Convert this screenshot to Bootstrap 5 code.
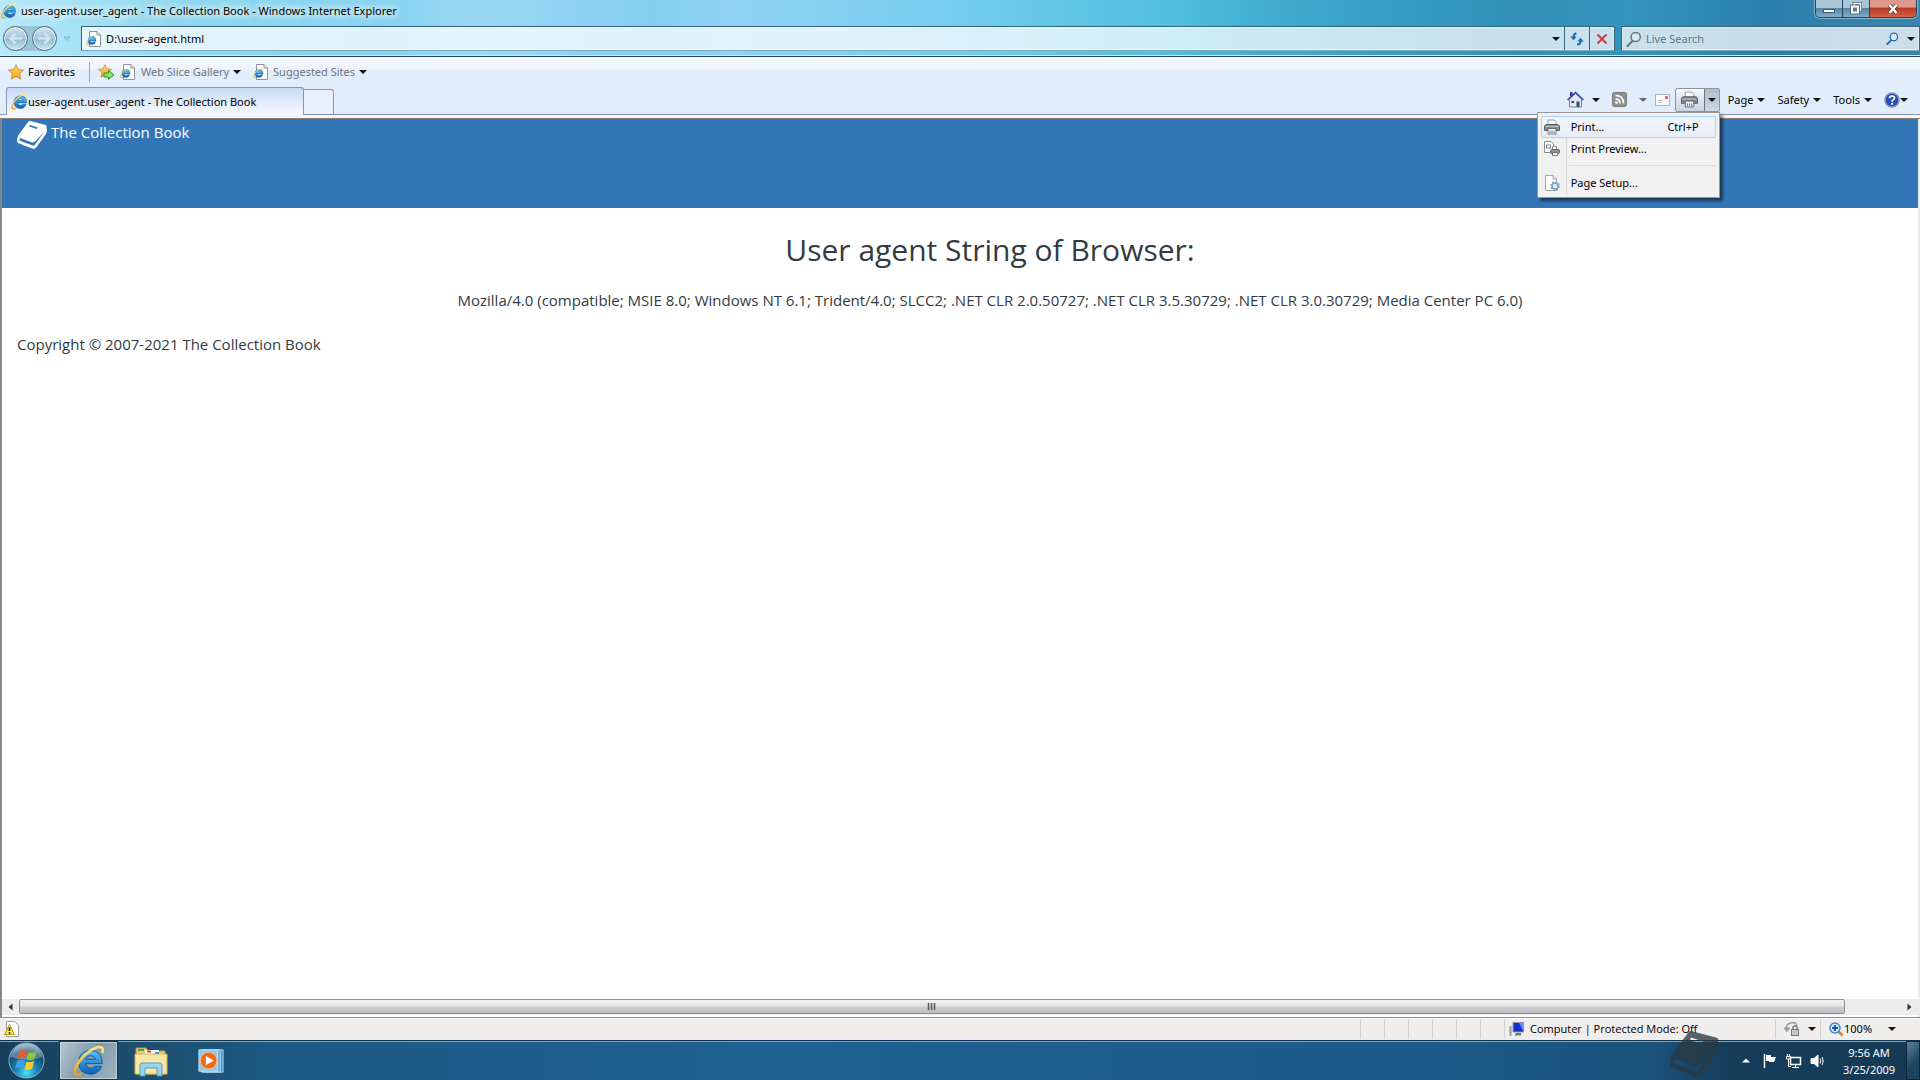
<!DOCTYPE html>
<html lang="en">
<head>
<meta charset="utf-8">
<meta name="viewport" content="width=device-width, initial-scale=1">
<title>user-agent.user_agent - The Collection Book</title>
<link href="https://cdn.jsdelivr.net/npm/bootstrap@5.3.0/dist/css/bootstrap.min.css" rel="stylesheet">
<style>
body{font-family:"Noto Sans","Open Sans",sans-serif;font-size:11px;line-height:16px;color:#000;background:#fff;overflow:hidden}
button{font:inherit;color:inherit;border:0;background:none;padding:0}
svg{flex:none;display:block}
.caret{flex:none;width:0;height:0;border:4px solid transparent;border-top-color:#111;border-bottom:0}
.caret.dim{border-top-color:#667}
.glass{background:linear-gradient(90deg,#b9e9fa 0,#8ed8ee 9%,#85d3f1 20%,#9bd7f7 25%,#84cef0 34%,#90d3f4 38%,#75cdee 50%,#62c6e4 55%,#4fbfdd 61%,#40add0 66%,#359fc6 72%,#3190b8 79%,#3394bd 85%,#2b7fae 92%,#3b84ab 100%);border-bottom:1px solid #28476a;box-shadow:inset 0 -1px #c9ecf8}
.title-row{height:26px;padding:0 3px 0 1px}
.title-text{height:22px}
.title-text span{text-shadow:0 0 8px #fff,0 0 8px #fff,0 0 10px #fff}
.win-btns{height:18px;border:1px solid #23425c;border-top:0;border-radius:0 0 5px 5px;overflow:hidden;box-shadow:0 0 0 1px #ffffff66}
.win-btns button{width:27px;height:17px;background:linear-gradient(#a9c6d8 45%,#5685a5 50%,#7fb0c9);border-right:1px solid #23425c;display:flex;align-items:center;justify-content:center}
.win-btns .close-btn{width:46px;border:0;background:linear-gradient(#dc9a8a 40%,#b93a20 50%,#d26444)}
.addr-row{height:30px;padding:0 0 5px 3px}
.orb{width:25px;height:25px;border-radius:50%;border:1px solid #4c6c82;background:linear-gradient(#d3e5ee,#a5c5d6 50%,#94bace 52%,#c6e4ee);box-shadow:inset 0 0 0 1px #e6f5fa;display:flex;align-items:center;justify-content:center}
.orb-pair{gap:4px;background:#7fa6bd88;border-radius:12px}
.recent{width:24px;padding-left:6px}
.field{height:25px;border:1px solid #36607e;border-bottom-color:#7fa9bd;background:#ffffffbb;box-shadow:inset 0 0 0 1px #ffffff77}
.field input{border:0;background:none;outline:0;padding:0;min-width:0}
.field .cell{width:25px;height:23px;border-left:1px solid #36607e;display:flex;align-items:center;justify-content:center}
.search-box{width:299px;margin-left:6px}
.search-box input::placeholder{color:#5d7681;opacity:1}
.lens-go{color:#1f64a8}
.bars{background:linear-gradient(#f7faff,#edf3fd 12px,#e1edfa 14px)}
.fav-row{height:31px;padding:0 8px 2px}
.fav-row a{color:#70757c;text-decoration:none}
.vline{width:1px;height:20px;background:#9aa5b5;margin:0 8px 0 14px}
.tab-row{height:27px;border-bottom:1px solid #8b97a8;padding-left:6px}
.tab-on{width:298px;height:28px;border:1px solid #8b97a8;border-bottom:0;border-radius:3px 3px 0 0;background:linear-gradient(#c7daf5,#dfeafa 50%,#f5f9ff);padding:0 4px;margin-bottom:-1px}
.tab-new{width:30px;height:25px;border:1px solid #8b97a8;border-left:0;border-bottom:0;border-radius:0 3px 0 0;background:#e9f0fb}
.cmd{height:27px;padding:0 12px 2px 0;gap:12px}
.cmd button,.cmd .grp{display:flex;align-items:center;justify-content:space-between}
.cmd .feeds{margin-right:-4px}
.split-btn{height:24px;width:45px;margin:0 -4px 0 -7px;border:1px solid #8a93a0;border-radius:2px;background:linear-gradient(#f4f8fd,#dce4ee 50%,#cbd5e2)}
.cmd .half{width:29px;height:22px;justify-content:center}
.cmd .drop{width:15px;height:22px;border-left:1px solid #6b7582;background:linear-gradient(#b1bccb,#cdd8e4);justify-content:center}
.print-menu{right:-1px;top:23px;width:183px;padding:3px;background:#f1f1f1;border:1px solid #979797;box-shadow:3px 3px 3px #0008;z-index:5}
.print-menu button{width:100%;height:22px;padding:0 16px 0 2px;border:1px solid transparent;border-radius:2px;justify-content:flex-start}
.print-menu .hot{background:linear-gradient(#f2f6fb,#e6edf7);border-color:#aecff7}
.print-menu svg{margin-right:11px}
.print-menu .gutter{left:28px;top:25px;bottom:2px;width:1px;background:#d9dadc}
.print-menu .rule{height:1px;background:#dcdcdc;margin:5px 0 6px 28px}
.under-tabs{height:4px;background:#f2f7ff;border-bottom:1px solid #8d7b70}
.view{border-left:2px solid #85888c;border-right:2px solid #e9edf2;background:#fff;min-height:0}
.doc{width:calc(100% + 60px);color:#333b42;font-family:"Open Sans","Noto Sans",sans-serif;font-size:15px;line-height:24px}
.masthead{height:89px;background:#3276b8;color:#fff;padding:1px 15px}
.masthead svg{margin-top:1px}
.doc h1{font-size:30px;line-height:38px;font-weight:400;margin:23px 0 19px}
.doc p{margin:0 0 20px}
.doc .copy{padding-left:15px}
.hscroll{height:18px;background:#ececec;border-bottom:2px solid #fff}
.hscroll button{width:17px;height:16px;display:flex;align-items:center;justify-content:center}
.thumb{height:15px;border:1px solid #8f8f8f;border-radius:2px;background:linear-gradient(#f3f3f3,#e3e3e4 48%,#cfcfd1 52%,#bdbdc0)}
.status{height:23px;background:#f0eded;border-top:1px solid #8e8e8e;box-shadow:inset 0 1px #fff}
.status .cell{height:20px;width:24px;border-left:1px solid #d2cfcf}
.status .zone{width:271px;font-family:"Open Sans","Noto Sans",sans-serif}
.status .privacy{width:45px}
.status .zoomer{width:100px}
.taskbar{height:40px;background:linear-gradient(90deg,#153f5c 0,#1b4a68 5%,#1d5983 14%,#1d6291 40%,#1c5a87 75%,#1b527b 86%,#163e5b 90%,#143a55);border-top:1px solid #12324b;box-shadow:inset 0 1px #7fa8c3;color:#fff;padding-left:8px}
.start{margin-right:14px}
.task-on{width:59px;height:39px;border:1px solid #1a3142;background:linear-gradient(120deg,#b8c8d1,#7f9aab 50%,#9db4c1);box-shadow:inset 0 0 0 1px #dfe9ee99;display:flex;align-items:center;justify-content:center}
.clock{width:80px;padding-left:6px;line-height:17px}
.desk{width:14px;height:39px;border:1px solid #0d2434;background:linear-gradient(135deg,#5d8199,#1c445f 60%)}
.stamp{right:200px;bottom:3px;z-index:4;color:#2b3a44;opacity:.78}
</style>
<script src="https://cdn.jsdelivr.net/npm/bootstrap@5.3.0/dist/js/bootstrap.bundle.min.js"></script>
</head>
<body class="d-flex flex-column vh-100">
<svg width="0" height="0" class="position-absolute" aria-hidden="true">
<defs>
<linearGradient id="blueE" x1="0" y1="0" x2="0" y2="1"><stop offset="0" stop-color="#5cc3f5"/><stop offset="1" stop-color="#0b5fb5"/></linearGradient>
<linearGradient id="gold" x1="0" y1="0" x2="0" y2="1"><stop offset="0" stop-color="#ffe680"/><stop offset="1" stop-color="#f0a010"/></linearGradient>
<radialGradient id="orbG" cx=".5" cy=".85" r=".85"><stop offset="0" stop-color="#4fe0f5"/><stop offset=".35" stop-color="#1987b8"/><stop offset=".7" stop-color="#1a4a70"/><stop offset="1" stop-color="#9ab8ca"/></radialGradient>
<symbol id="ie" viewBox="0 0 16 16"><path d="M14.600 9.300H6.300Q6.700 11.600 9 11.600 10.400 11.600 11.100 10.600H14.300Q12.900 14.600 8.800 14.600 2.900 14.300 2.900 8.600 3.100 2.900 8.800 2.700 14.900 3 14.600 9.300ZM11.300 7.100Q10.900 5.300 8.800 5.300 6.800 5.300 6.300 7.100Z" fill="url(#blueE)" stroke="#0d5ba6" stroke-width=".5"/><path d="M14.600 4Q15.700.9 12.900 1 9.600 1.500 5.400 5.500 1 10.300.9 13.500 1.100 15.900 4.300 14.500" fill="none" stroke="url(#gold)" stroke-width="1.300"/></symbol>
<symbol id="iepage" viewBox="0 0 16 16"><path d="M3.500.5H11L14.500 4V15.500H3.500Z" fill="#fff" stroke="#8d9199"/><path d="M11 .5V4H14.500" fill="#e2e5ea" stroke="#8d9199"/><use href="#ie" x="0" y="3.500" width="11" height="11"/></symbol>
<symbol id="star" viewBox="0 0 16 16"><path d="M8 .8 10.200 5.600 15.400 6.200 11.500 9.700 12.600 15 8 12.300 3.400 15 4.500 9.700.6 6.200 5.800 5.600Z" fill="url(#gold)" stroke="#c97a10" stroke-width=".8"/></symbol>
<symbol id="printer" viewBox="0 0 16 16"><path d="M4 1H10L12 3V6H4Z" fill="#fff" stroke="#8a8a8a" stroke-width=".8"/><path d="M2 5.500H14L15.500 7V11.500H.5V7Z" fill="#85898c" stroke="#5e6366"/><path d="M1.500 7.500H14.500" stroke="#c5c9cc"/><path d="M4 9.500H12V15H4Z" fill="#f7fbff" stroke="#555" stroke-width=".8"/><path d="M6 11.500V14M8 11.500V14M10 11.500V14" stroke="#437fb5"/></symbol>
<symbol id="book" viewBox="0 0 30 28"><path fill="currentColor" fill-rule="evenodd" d="M11.500.6Q12.300-.1 13.500.1L28.500 4.100Q30 4.700 29.300 6.200L30 9 29.300 12.500 19 26.700Q17.500 28.400 15 27.500L1.500 22.300Q-.3 21.200.1 18.500.6 14.500 2.500 12.500ZM3 17Q1.900 19.200 3.600 20.100L15.600 24.600Q16.800 24.900 17.600 23.900L27.600 10.200 18.200 20.300Q16.700 21.900 14.500 21.200ZM12.800 4 12.300 5.600 19.300 7.900 20.800 6.500Z"/></symbol>
<symbol id="lens" viewBox="0 0 16 16"><path d="M7 9.500 1.500 15" stroke="currentColor" stroke-width="2.200" stroke-linecap="round"/><circle cx="9.700" cy="6" r="4.600" fill="#d5ecf7" stroke="currentColor" stroke-width="1.500"/></symbol>
</defs>
</svg>

<header class="glass flex-shrink-0">
  <div class="title-row d-flex justify-content-between align-items-start">
    <div class="title-text d-flex align-items-center gap-1"><svg width="16" height="16"><use href="#ie"/></svg><span>user-agent.user_agent - The Collection Book - Windows Internet Explorer</span></div>
    <div class="win-btns d-flex">
      <button type="button" aria-label="Minimize"><svg width="12" height="12"><rect x=".5" y="6.500" width="11" height="3" fill="#fff" stroke="#455b6b"/></svg></button>
      <button type="button" aria-label="Restore"><svg width="12" height="13" fill="none"><path d="M4 3.500V1.500H10.500V8.500H9" stroke="#455b6b" stroke-width="3"/><path d="M4 3V1.500H10.500V8.500H9" stroke="#fff" stroke-width="1.500"/><rect x="2" y="4.500" width="6" height="6" stroke="#455b6b" stroke-width="3.500"/><rect x="2" y="4.500" width="6" height="6" fill="#59798f" stroke="#fff" stroke-width="2"/></svg></button>
      <button type="button" class="close-btn" aria-label="Close"><svg width="12" height="12"><path d="M2.500 2 9.500 10M9.500 2 2.500 10" stroke="#5a3432" stroke-width="4"/><path d="M2.500 2 9.500 10M9.500 2 2.500 10" stroke="#fff" stroke-width="2.500"/></svg></button>
    </div>
  </div>
  <div class="addr-row d-flex align-items-center">
    <div class="orb-pair d-flex">
      <button type="button" class="orb" aria-label="Back"><svg width="15" height="15" fill="none" stroke="#cfe5ee" stroke-width="2.500"><path d="M14 7.500H3M7.500 2.500 2.500 7.500 7.500 12.500"/></svg></button>
      <button type="button" class="orb" aria-label="Forward"><svg width="15" height="15" fill="none" stroke="#cfe5ee" stroke-width="2.500"><path d="M1 7.500H12M7.500 2.500 12.500 7.500 7.500 12.500"/></svg></button>
    </div>
    <button type="button" class="recent" aria-label="Recent pages"><svg width="8" height="6"><path d="M1 1H7L4 4.500Z" fill="#a9dcef" stroke="#7ab0c8"/></svg></button>
    <div class="field d-flex align-items-center flex-grow-1">
      <svg class="ms-1" width="16" height="16"><use href="#iepage"/></svg>
      <input class="flex-grow-1 ms-1" type="text" value="D:\user-agent.html" aria-label="Address">
      <button type="button" class="px-1" aria-label="Show address list"><span class="caret d-block"></span></button>
      <button type="button" class="cell" aria-label="Refresh"><svg width="14" height="14" fill="none" stroke="#2368b0" stroke-width="2"><path d="M6.500 1.500Q3.500 1.500 3.500 5"/><path d="M.3 4.500H6.700L3.500 8.300Z" fill="#2368b0" stroke="none"/><path d="M7 12.500Q10.500 12.500 10.500 9"/><path d="M7.300 9.500H13.700L10.500 5.700Z" fill="#2368b0" stroke="none"/></svg></button>
      <button type="button" class="cell" aria-label="Stop"><svg width="12" height="12"><path d="M1.500 1.500 10.500 10.500M10.500 1.500 1.500 10.500" stroke="#cf4347" stroke-width="2.200"/></svg></button>
    </div>
    <div class="field search-box d-flex align-items-center">
      <svg class="ms-1 text-secondary" width="16" height="16"><use href="#lens"/></svg>
      <input class="flex-grow-1 ms-1" type="search" placeholder="Live Search" aria-label="Live Search">
      <button type="button" class="lens-go me-1" aria-label="Search"><svg width="13" height="13"><use href="#lens"/></svg></button>
      <button type="button" class="px-1" aria-label="Search options"><span class="caret d-block"></span></button>
    </div>
  </div>
</header>

<nav class="bars flex-shrink-0">
  <div class="fav-row d-flex align-items-center">
    <button type="button" class="d-flex align-items-center gap-1"><svg width="16" height="16"><use href="#star"/></svg>Favorites</button>
    <span class="vline"></span>
    <button type="button" aria-label="Add to Favorites Bar"><svg width="17" height="17" viewBox="0 0 17 17"><use href="#star" width="14" height="14" y="1"/><path d="M6 10H10.500V7.500L16 12 10.500 16.300V14H6Z" fill="#8be070" stroke="#2f8f28"/></svg></button>
    <a href="#" class="d-flex align-items-center ms-1"><svg class="me-1" width="18" height="16"><use href="#iepage"/></svg>Web Slice Gallery<span class="caret ms-1"></span></a>
    <a href="#" class="d-flex align-items-center ms-2"><svg class="mx-1" width="16" height="16"><use href="#iepage"/></svg>Suggested Sites<span class="caret ms-1"></span></a>
  </div>
  <div class="tab-row d-flex align-items-end">
    <div class="tab-on d-flex align-items-center"><svg width="17" height="17"><use href="#ie"/></svg><span>user-agent.user_agent - The Collection Book</span></div>
    <button type="button" class="tab-new" aria-label="New tab"></button>
    <div class="cmd ms-auto d-flex align-items-center">
      <button type="button" class="gap-2" aria-label="Home"><svg width="17" height="17" viewBox="0 0 17 17"><path d="M3 1H5.500V5H3Z" fill="#2a3db0"/><path d="M2.500 8 8.500 2.500 14.500 8V16H2.500Z" fill="#e6e9f0" stroke="#7a8194"/><path d="M.5 9 8.500 1.500 16.500 9" fill="none" stroke="#3044b8" stroke-width="1.500"/><path d="M9.500 10.500H12.500V16H9.500Z" fill="#1f5688"/><path d="M4.500 10H7V12H4.500Z" fill="#333c55"/></svg><span class="caret"></span></button>
      <button type="button" class="gap-2 feeds" aria-label="Feeds"><svg width="15" height="15" fill="none" stroke="#fff" stroke-width="1.600"><rect x=".5" y=".5" width="14" height="14" rx="2" fill="#929292" stroke="#777" stroke-width="1"/><path d="M3.500 3.500Q11.500 3.500 11.500 11.500M3.500 7Q8 7 8 11.500"/><circle cx="4.500" cy="10.600" r="1.300" fill="#fff" stroke="none"/></svg><span class="caret dim ms-1"></span></button>
      <button type="button" aria-label="Read mail"><svg width="15" height="12"><rect x=".5" y=".5" width="14" height="11" fill="#fbfbfd" stroke="#b2b2bb"/><rect x="10" y="2" width="3" height="3" fill="#e66"/><path d="M3 6.500H8M3 8.500H7" stroke="#bbb"/></svg></button>
      <div class="grp split-btn position-relative">
        <button type="button" class="half" aria-label="Print"><svg width="17" height="17"><use href="#printer"/></svg></button>
        <button type="button" class="drop" aria-label="Print options"><span class="caret"></span></button>
        <div class="print-menu position-absolute" role="menu">
          <span class="gutter position-absolute"></span>
          <button type="button" role="menuitem" class="hot"><svg width="16" height="16"><use href="#printer"/></svg>Print...<span class="ms-auto">Ctrl+P</span></button>
          <button type="button" role="menuitem"><svg width="16" height="16"><path d="M.5.500H7L9.500 3V11.500H.5Z" fill="#fff" stroke="#8a8a8a"/><rect x="2.500" y="4" width="4" height="3" fill="none" stroke="#789"/><path d="M8.500 5.500H12.500V8.500H8.500Z" fill="#fff" stroke="#8a8a8a"/><rect x="6.500" y="8.500" width="9" height="4" rx="1" fill="#8b9094" stroke="#666"/><path d="M8.500 11.500H13.500V14.500H8.500Z" fill="#fff" stroke="#777"/></svg>Print Preview...</button>
          <div class="rule"></div>
          <button type="button" role="menuitem"><svg width="16" height="16"><path d="M1.500.500H9L12.500 4V15.500H1.500Z" fill="#fff" stroke="#a2a5a9"/><path d="M9 .5V4H12.500" fill="none" stroke="#a2a5a9"/><circle cx="11" cy="11" r="3" fill="#dcecf7" stroke="#7c9fbb" stroke-width="1.500"/><circle cx="11" cy="11" r="4.200" fill="none" stroke="#7c9fbb" stroke-width="1.500" stroke-dasharray="1.600 1.700"/></svg>Page Setup...</button>
        </div>
      </div>
      <button type="button" class="gap-1">Page<span class="caret"></span></button>
      <button type="button" class="gap-1">Safety<span class="caret"></span></button>
      <button type="button" class="gap-1">Tools<span class="caret"></span></button>
      <button type="button" aria-label="Help"><svg width="16" height="16"><circle cx="8" cy="8" r="7" fill="#2450b8" stroke="#8d96a8" stroke-width="1.500"/><path d="M5.500 6.300Q5.700 4 8 4 10.500 4 10.500 6 10.500 7.200 9 8 8.100 8.500 8.100 9.700" fill="none" stroke="#fff" stroke-width="1.700"/><circle cx="8.100" cy="11.800" r="1.100" fill="#fff"/></svg><span class="caret"></span></button>
    </div>
  </div>
  <div class="under-tabs"></div>
</nav>

<main class="view flex-grow-1 d-flex flex-column overflow-hidden">
  <div class="doc flex-grow-1">
    <div class="masthead d-flex align-items-start"><svg class="me-1" width="30" height="28"><use href="#book"/></svg><span>The Collection Book</span></div>
    <h1 class="text-center">User agent String of Browser:</h1>
    <p class="text-center">Mozilla/4.0 (compatible; MSIE 8.0; Windows NT 6.1; Trident/4.0; SLCC2; .NET CLR 2.0.50727; .NET CLR 3.5.30729; .NET CLR 3.0.30729; Media Center PC 6.0)</p>
    <p class="copy">Copyright © 2007-2021 The Collection Book</p>
  </div>
  <div class="hscroll d-flex flex-shrink-0">
    <button type="button" aria-label="Scroll left"><svg width="5" height="8"><path d="M4.500.500V7.500L.5 4Z" fill="#333"/></svg></button>
    <div class="flex-grow-1"><div class="thumb d-flex align-items-center justify-content-center" style="width:97%"><svg width="9" height="7"><path d="M1.500 0V7M4.500 0V7M7.500 0V7" stroke="#555" stroke-width="1.500"/></svg></div></div>
    <button type="button" aria-label="Scroll right"><svg width="5" height="8"><path d="M.5.500V7.500L4.500 4Z" fill="#333"/></svg></button>
  </div>
</main>

<footer class="status flex-shrink-0 d-flex align-items-center">
  <svg class="ms-1" width="16" height="16"><path d="M2.500.500H10.500L14.500 4V15.500H2.500Z" fill="#fff" stroke="#a0a0a0"/><path d="M5.500 3.500 10.500 13.500H.5Z" fill="#fbe43c" stroke="#b89b10"/><path d="M5.500 6.500V10" stroke="#222" stroke-width="1.600"/><circle cx="5.500" cy="11.900" r=".9" fill="#222"/></svg>
  <div class="d-flex ms-auto"><span class="cell"></span><span class="cell"></span><span class="cell"></span><span class="cell"></span><span class="cell"></span><span class="cell"></span></div>
  <div class="cell zone d-flex align-items-center ps-1"><svg width="17" height="15"><path d="M1.500 4V14" stroke="#999" stroke-width="2"/><path d="M4 .5H14.500V10H4Z" fill="#1330c8" stroke="#8a94b0"/><path d="M10 .5H14.500V10Z" fill="#6d8df0"/><path d="M7 11H12V13.500H5.500Z" fill="#777"/></svg><span class="ms-1">Computer | Protected Mode: Off</span></div>
  <button type="button" class="cell privacy d-flex align-items-center ps-2 gap-2" aria-label="Privacy report"><svg width="16" height="16" fill="none" stroke="#9a9a9a"><path d="M3 10Q.5 3 7 2L11 1.500 13 5" stroke-width="1.500"/><path d="M0 7 3 10.500 6 7Z" fill="#9a9a9a"/><rect x="7.500" y="8.500" width="7" height="6" fill="#c9c9c9" stroke="#777"/><path d="M9 8V6Q11 3.500 13 6V8" stroke="#777" stroke-width="1.500"/></svg><span class="caret"></span></button>
  <button type="button" class="cell zoomer d-flex align-items-center ps-2"><svg width="15" height="15"><path d="M9 9 13.500 13.500" stroke="#c08a3a" stroke-width="2.500"/><circle cx="6" cy="6" r="5" fill="#d6e9fa" stroke="#4684c6" stroke-width="1.500"/><path d="M6 3V9M3 6H9" stroke="#1752b5" stroke-width="2"/></svg>100%<span class="caret ms-3"></span></button>
</footer>

<footer class="taskbar flex-shrink-0 d-flex align-items-center position-relative">
  <button type="button" class="start" aria-label="Start"><svg width="37" height="37" viewBox="0 0 37 37"><circle cx="18.500" cy="18.500" r="17.500" fill="url(#orbG)" stroke="#8fb0c4"/><path d="M3 15Q6 2 18.500 2 31 2 34 15 18 20 3 15Z" fill="#fff" opacity=".28"/><path d="M11.500 9.500Q15 7 19 9.300L17.300 16.800Q13.500 14.800 9.500 17Z" fill="#ee5a24"/><path d="M20.500 10Q24.500 11.800 28.500 9.300L26.500 17Q22.500 19.500 18.800 17.600Z" fill="#8cc83c"/><path d="M9 18.700Q13 16.500 16.900 18.500L15.200 26Q11.500 24 7.200 26.200Z" fill="#3fa0e4"/><path d="M18.400 19.400Q22.400 21.300 26.200 18.800L24.300 26.500Q20.300 29 16.600 27Z" fill="#fdc92e"/></svg></button>
  <button type="button" class="task-on" aria-label="Internet Explorer"><svg width="32" height="32"><use href="#ie"/></svg></button>
  <button type="button" class="ms-3" aria-label="Windows Explorer"><svg width="34" height="32" viewBox="0 0 34 32"><path d="M2 3H12L14 6H31V29H2Z" fill="#e9cf74" stroke="#b99c48"/><path d="M4 4H10V6H4Z" fill="#3aa648"/><path d="M11 5H25V9H11Z" fill="#fff"/><path d="M13 5.500H17V7.500H13Z" fill="#d8442f"/><path d="M21 7H25V9H21Z" fill="#2c8fd0"/><path d="M1 9H33V29H1Z" fill="#f8e7a4" stroke="#ceb362"/><path d="M6 31V20Q6 18 8 18H26Q28 18 28 20V31H23V23H11V31Z" fill="#9bd3ea" stroke="#4f9fc4"/></svg></button>
  <button type="button" class="ms-4 ps-1" aria-label="Windows Media Player"><svg width="30" height="26" viewBox="0 0 28 28"><path d="M6 2H27V26H6Z" fill="#4b93c8" stroke="#b8dcf0"/><path d="M4 2H24V26H4Z" fill="#69addb" stroke="#b8dcf0"/><path d="M1 2H21V25H1Z" fill="#92c7e8" stroke="#c9e5f5"/><circle cx="11.500" cy="13.500" r="9" fill="#ec6a1c" stroke="#fac08c"/><path d="M8.500 8.500V18.500L17 13.500Z" fill="#fff"/></svg></button>
  <div class="ms-auto d-flex align-items-center">
    <div class="d-flex align-items-center gap-2">
      <svg class="me-1" width="8" height="5"><path d="M0 4.500 4 .5 8 4.500Z" fill="#fff"/></svg>
      <svg width="16" height="16"><path d="M2.500 1V15" stroke="#fff" stroke-width="1.500"/><path d="M4 2H9V4H14L12 9H7V8H4Z" fill="#fff"/></svg>
      <svg width="16" height="16" fill="none" stroke="#fff"><path d="M4.500 4.500H14.500V11.500H4.500Z" stroke-width="1.500"/><path d="M9.500 12V14.500M6 14.500H13M2.500 6V13.500H5M1.500 1V3M3.500 1V3M.5 3.500H4.500V6H.5Z"/></svg>
      <svg width="16" height="16" fill="none" stroke="#fff"><path d="M1 5.500H4L8 2V14L4 10.500H1Z" fill="#fff"/><path d="M10 5.500Q11.500 8 10 10.500M12 4Q14.500 8 12 12"/></svg>
    </div>
    <div class="clock text-center">9:56 AM<br>3/25/2009</div>
    <button type="button" class="desk" aria-label="Show desktop"></button>
  </div>
  <svg class="stamp position-absolute" width="51" height="46"><use href="#book"/></svg>
</footer>
</body>
</html>
